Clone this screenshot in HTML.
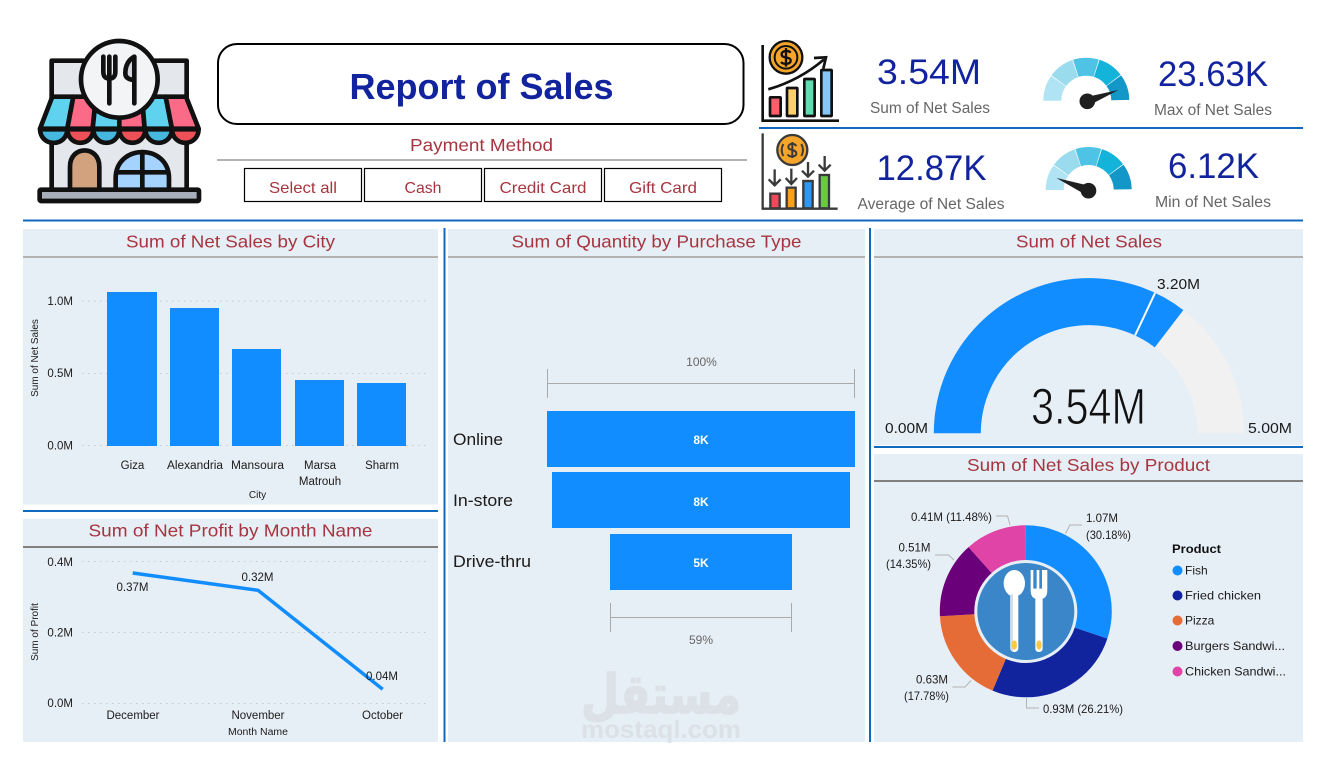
<!DOCTYPE html>
<html><head><meta charset="utf-8"><title>Report of Sales</title>
<style>
html,body{margin:0;padding:0;background:#fff;width:1323px;height:759px;overflow:hidden}
svg{display:block}
text{font-family:"Liberation Sans","DejaVu Sans",sans-serif;fill:#1c1b1a}
.t{font-size:17.5px;fill:#A6353F;text-anchor:middle}
.b{font-size:16px;fill:#A6353F;text-anchor:middle}
.k{font-size:35px;fill:#12239E;text-anchor:middle}
.l{font-size:15.5px;fill:#666;text-anchor:middle}
.a{font-size:11.5px;text-anchor:end}
.x{font-size:11.5px;text-anchor:middle}
.n{font-size:10px;text-anchor:middle}
.d{font-size:12px}
.m{font-size:14.5px}
.g{stroke:#c4c8cc;stroke-width:1;stroke-dasharray:1.5 4.5}
</style></head><body>
<svg width="1323" height="759" viewBox="0 0 1323 759" xmlns="http://www.w3.org/2000/svg">
<rect width="1323" height="759" fill="#fff"/>

<!-- store icon -->
<g transform="translate(20 30) scale(.3333)" stroke="#111" stroke-width="14" stroke-linejoin="round">
<rect x="95" y="92" width="405" height="390" fill="#E4E8EC"/>
<path d="M97 200H160L142 296H60Z" fill="#5FD2F0"/>
<path d="M160 200H228L218 296H142Z" fill="#FB6B87"/>
<path d="M228 200H298V296H218Z" fill="#5FD2F0"/>
<path d="M298 200H366L374 296H298Z" fill="#FB6B87"/>
<path d="M366 200H437L456 296H374Z" fill="#5FD2F0"/>
<path d="M437 200H498L536 296H456Z" fill="#FB6B87"/>
<path d="M60 298H142C140 352 62 352 60 298Z" fill="#46B8E0"/>
<path d="M142 298H220C218 352 144 352 142 298Z" fill="#EE5058"/>
<path d="M220 298H298C296 352 222 352 220 298Z" fill="#46B8E0"/>
<path d="M298 298H376C374 352 300 352 298 298Z" fill="#EE5058"/>
<path d="M376 298H456C454 352 378 352 376 298Z" fill="#46B8E0"/>
<path d="M456 298H536C534 352 458 352 456 298Z" fill="#EE5058"/>
<path d="M150 480V410C150 345 238 345 238 410V480Z" fill="#D2A27F"/>
<path d="M287 480V445C287 340 447 340 447 445V480Z" fill="#A5D3FF"/>
<path d="M367 362V480M287 427H447" fill="none"/>
<rect x="59" y="479" width="478" height="34" rx="4" fill="#A8AFBB"/>
<circle cx="298" cy="148" r="115" fill="#F2F4F6"/>
<path d="M250 80V125Q250 146 268 146Q286 146 286 125V80M268 80V220" fill="none" stroke-linecap="round"/>
<path d="M343 220V80Q316 95 316 130Q316 148 343 150" fill="#D4D8DC" stroke-linecap="round"/>
</g>

<!-- title -->
<rect x="218" y="44" width="525.500" height="80" rx="19" fill="#fff" stroke="#000" stroke-width="2"/>
<text x="481.500" y="99" font-size="36" font-weight="700" text-anchor="middle" textLength="264" lengthAdjust="spacingAndGlyphs" style="fill:#12239E">Report of Sales</text>
<text class="t" x="481.500" y="151" textLength="143" lengthAdjust="spacingAndGlyphs">Payment Method</text>
<rect x="217" y="159" width="530" height="2" fill="#b3b3b3"/>
<g fill="#fff" stroke="#000" stroke-width="1.200">
<rect x="244.500" y="168.500" width="117" height="33"/><rect x="364.500" y="168.500" width="117" height="33"/><rect x="484.500" y="168.500" width="117" height="33"/><rect x="604.500" y="168.500" width="117" height="33"/>
</g>
<text class="b" x="303" y="193" textLength="68" lengthAdjust="spacingAndGlyphs">Select all</text>
<text class="b" x="423" y="193" textLength="37" lengthAdjust="spacingAndGlyphs">Cash</text>
<text class="b" x="543" y="193" textLength="87" lengthAdjust="spacingAndGlyphs">Credit Card</text>
<text class="b" x="663" y="193" textLength="68" lengthAdjust="spacingAndGlyphs">Gift Card</text>

<!-- growth icon -->
<g transform="translate(750 30) scale(.3333)" stroke="#111" stroke-width="8" fill="none">
<path d="M38 45V272H267" stroke-width="8"/>
<rect x="60" y="202" width="32" height="56" fill="#FF5C6C" rx="2"/>
<rect x="111" y="174" width="31" height="84" fill="#FFCF68" rx="2"/>
<rect x="163" y="147" width="31" height="111" fill="#5FDDB0" rx="2"/>
<rect x="214" y="120" width="31" height="138" fill="#85C6F7" rx="2"/>
<circle cx="108" cy="82" r="49" fill="#F5A52A" stroke-width="7"/>
<circle cx="108" cy="82" r="34" fill="#F5A52A" stroke-width="6"/>
<path d="M122 68C116 60 95 61 95 73C95 87 122 78 122 92C122 104 100 104 93 96M108 54V110" stroke-width="7"/>
<path d="M55 178Q150 150 222 88M192 84L228 82L220 116" stroke-width="8"/>
</g>

<!-- average icon -->
<g transform="translate(750 120) scale(.3333)" fill="none" stroke="#3a3a3a" stroke-width="7">
<path d="M38 40V266H263"/>
<rect x="61" y="221" width="28" height="44" fill="#F0475A"/>
<rect x="110" y="203" width="27" height="62" fill="#F9A11B"/>
<rect x="160" y="183" width="28" height="82" fill="#2E96F5"/>
<rect x="209" y="165" width="28" height="100" fill="#6CC93A"/>
<path d="M74 148V196M56 178L74 196L92 178M124 146V192M107 174L124 192L141 174M174 126V170M156 152L174 170L192 152M224 108V152M206 134L224 152L242 134"/>
<circle cx="127" cy="90" r="45" fill="#F5A52A"/>
<path d="M100 72Q90 90 100 108M154 72Q164 90 154 108M139 78C133 68 115 70 115 81C115 93 139 87 139 100C139 112 118 112 113 103M127 66V114" stroke-width="6"/>
</g>

<!-- KPI -->
<text class="k" x="929" y="84" textLength="104" lengthAdjust="spacingAndGlyphs">3.54M</text>
<text class="l" x="930" y="113" textLength="120" lengthAdjust="spacingAndGlyphs">Sum of Net Sales</text>
<text class="k" x="1213" y="86" textLength="110" lengthAdjust="spacingAndGlyphs">23.63K</text>
<text class="l" x="1213" y="115" textLength="118" lengthAdjust="spacingAndGlyphs">Max of Net Sales</text>
<text class="k" x="931.500" y="180" textLength="110" lengthAdjust="spacingAndGlyphs">12.87K</text>
<text class="l" x="931" y="209" textLength="147" lengthAdjust="spacingAndGlyphs">Average of Net Sales</text>
<text class="k" x="1213.500" y="178" textLength="91" lengthAdjust="spacingAndGlyphs">6.12K</text>
<text class="l" x="1213" y="207" textLength="116" lengthAdjust="spacingAndGlyphs">Min of Net Sales</text>

<!-- small gauges -->
<g fill="none" stroke-width="18">
<g transform="rotate(180 1086.300 100.700)">
<circle cx="1086.300" cy="100.700" r="34" pathLength="100" stroke="#B0E3F3" stroke-dasharray="9.700 90.300" stroke-dashoffset="0"/>
<circle cx="1086.300" cy="100.700" r="34" pathLength="100" stroke="#9ADBEE" stroke-dasharray="9.700 90.300" stroke-dashoffset="-10"/>
<circle cx="1086.300" cy="100.700" r="34" pathLength="100" stroke="#4FC3E6" stroke-dasharray="9.700 90.300" stroke-dashoffset="-20"/>
<circle cx="1086.300" cy="100.700" r="34" pathLength="100" stroke="#14B3D9" stroke-dasharray="9.700 90.300" stroke-dashoffset="-30"/>
<circle cx="1086.300" cy="100.700" r="34" pathLength="100" stroke="#1397C9" stroke-dasharray="9.700 90.300" stroke-dashoffset="-40"/>
</g>
<g transform="rotate(180 1088.700 190)">
<circle cx="1088.700" cy="190" r="34" pathLength="100" stroke="#B0E3F3" stroke-dasharray="9.700 90.300" stroke-dashoffset="0"/>
<circle cx="1088.700" cy="190" r="34" pathLength="100" stroke="#9ADBEE" stroke-dasharray="9.700 90.300" stroke-dashoffset="-10"/>
<circle cx="1088.700" cy="190" r="34" pathLength="100" stroke="#4FC3E6" stroke-dasharray="9.700 90.300" stroke-dashoffset="-20"/>
<circle cx="1088.700" cy="190" r="34" pathLength="100" stroke="#14B3D9" stroke-dasharray="9.700 90.300" stroke-dashoffset="-30"/>
<circle cx="1088.700" cy="190" r="34" pathLength="100" stroke="#1397C9" stroke-dasharray="9.700 90.300" stroke-dashoffset="-40"/>
</g>
</g>
<g fill="#1f1f1f">
<circle cx="1087.300" cy="101.300" r="7.800"/><path d="M1085.800 97.100L1118.500 90L1088.800 105.500Z"/>
<circle cx="1088.500" cy="190.700" r="7.800"/><path d="M1056.500 178L1090.300 186L1086.700 195.400Z"/>
</g>

<!-- divider lines -->
<g fill="#1068BF">
<rect x="759" y="127" width="544" height="2"/>
<rect x="23" y="219.500" width="1280" height="2"/>
<rect x="23" y="510" width="415" height="2"/>
<rect x="443.500" y="228" width="2" height="514"/>
<rect x="869" y="228" width="2" height="514"/>
<rect x="874" y="446" width="429" height="2"/>
</g>

<!-- panels -->
<g fill="#E6EEF6">
<rect x="23" y="229" width="415" height="275.500"/>
<rect x="23" y="519" width="415" height="223"/>
<rect x="448" y="229" width="417" height="513"/>
<rect x="874" y="229" width="429" height="216"/>
<rect x="874" y="454" width="429" height="288"/>
</g>
<g fill="#b3b3b3">
<rect x="23" y="256" width="415" height="2"/>
<rect x="448" y="256" width="417" height="2"/>
<rect x="874" y="256" width="429" height="2"/>
</g>
<rect x="23" y="546" width="415" height="2" fill="#808080"/>
<rect x="874" y="480" width="429" height="2" fill="#808080"/>

<text class="t" x="230.500" y="247.500" textLength="209" lengthAdjust="spacingAndGlyphs">Sum of Net Sales by City</text>
<text class="t" x="656.500" y="247.500" textLength="290" lengthAdjust="spacingAndGlyphs">Sum of Quantity by Purchase Type</text>
<text class="t" x="1089" y="247.500" textLength="146" lengthAdjust="spacingAndGlyphs">Sum of Net Sales</text>
<text class="t" x="230.500" y="536.500" textLength="284" lengthAdjust="spacingAndGlyphs">Sum of Net Profit by Month Name</text>
<text class="t" x="1088.500" y="471" textLength="243" lengthAdjust="spacingAndGlyphs">Sum of Net Sales by Product</text>

<!-- bar chart -->
<path class="g" d="M82 301H428M82 373.500H428M82 445.500H428"/>
<g fill="#118DFF">
<rect x="107" y="292" width="50" height="154"/>
<rect x="170" y="308" width="49" height="138"/>
<rect x="232" y="349" width="49" height="97"/>
<rect x="295" y="380" width="49" height="66"/>
<rect x="357" y="383" width="49" height="63"/>
</g>
<text class="a" x="73" y="305">1.0M</text><text class="a" x="73" y="377">0.5M</text><text class="a" x="73" y="449.500">0.0M</text>
<text class="x" x="132.500" y="469">Giza</text>
<text class="x" x="195" y="469" textLength="56" lengthAdjust="spacingAndGlyphs">Alexandria</text>
<text class="x" x="257.500" y="469" textLength="53" lengthAdjust="spacingAndGlyphs">Mansoura</text>
<text class="x" x="320" y="469">Marsa</text>
<text class="x" x="320" y="485">Matrouh</text>
<text class="x" x="382" y="469">Sharm</text>
<text class="n" x="257.500" y="498">City</text>
<text class="n" transform="translate(38 358) rotate(-90)">Sum of Net Sales</text>

<!-- line chart -->
<path class="g" d="M82 561.500H428M82 632.500H428M82 703.500H428"/>
<path d="M132.700 573L258 590.300L382.700 689.300" fill="none" stroke="#118DFF" stroke-width="3.500" stroke-linejoin="round"/>
<text class="a" x="73" y="566">0.4M</text><text class="a" x="73" y="636.500">0.2M</text><text class="a" x="73" y="707">0.0M</text>
<text class="x" x="132.500" y="591">0.37M</text><text class="x" x="257.500" y="581">0.32M</text><text class="x" x="382" y="680">0.04M</text>
<text class="x" x="133" y="719">December</text><text class="x" x="258" y="719">November</text><text class="x" x="382.500" y="719">October</text>
<text class="n" x="258" y="735" textLength="60" lengthAdjust="spacingAndGlyphs">Month Name</text>
<text class="n" transform="translate(38 632) rotate(-90)">Sum of Profit</text>

<!-- funnel -->
<g fill="#118DFF">
<rect x="547" y="411" width="308" height="56"/>
<rect x="552" y="472" width="298" height="56"/>
<rect x="610" y="534" width="182" height="56"/>
</g>
<path d="M547.500 369V398M547.500 383.500H854.500M854.500 369V398M610.500 603V632M610.500 617.500H791.500M791.500 603V632" stroke="#aaa" stroke-width="1" fill="none"/>
<text x="701.500" y="366" font-size="12" text-anchor="middle" style="fill:#666">100%</text>
<text x="701" y="644" font-size="12" text-anchor="middle" style="fill:#666">59%</text>
<text x="453" y="445" font-size="16.500" textLength="50" lengthAdjust="spacingAndGlyphs">Online</text>
<text x="453" y="506" font-size="16.500" textLength="60" lengthAdjust="spacingAndGlyphs">In-store</text>
<text x="453" y="567" font-size="16.500" textLength="78" lengthAdjust="spacingAndGlyphs">Drive-thru</text>
<g font-size="12" font-weight="700" text-anchor="middle">
<text x="701" y="444" style="fill:#fff">8K</text><text x="701" y="506" style="fill:#fff">8K</text><text x="701" y="567" style="fill:#fff">5K</text>
</g>

<!-- watermark -->
<text x="661" y="713" font-size="54" font-weight="700" text-anchor="middle" textLength="160" lengthAdjust="spacingAndGlyphs" style="font-family:'DejaVu Sans',sans-serif;fill:#DBE1E7;stroke:#DBE1E7;stroke-width:1.500">مستقل</text>
<text x="661" y="738" font-size="25" font-weight="700" text-anchor="middle" textLength="160" lengthAdjust="spacingAndGlyphs" style="fill:#DBE1E7">mostaql.com</text>

<!-- main gauge -->
<g fill="none" stroke-width="47" transform="rotate(180 1089 433.300)">
<circle cx="1089" cy="433.300" r="131.700" pathLength="200" stroke="#F1F1F1" stroke-dasharray="100 100"/>
<circle cx="1089" cy="433.300" r="131.700" pathLength="200" stroke="#118DFF" stroke-dasharray="70.800 129.200"/>
</g>
<path d="M1155 293.100L1135.100 335.300" stroke="#fff" stroke-width="2" fill="none"/>
<text x="1088.500" y="424" font-size="51" text-anchor="middle" textLength="115" lengthAdjust="spacingAndGlyphs" style="fill:#111;stroke:#E6EEF6;stroke-width:.9">3.54M</text>
<text class="m" x="885" y="433" textLength="43" lengthAdjust="spacingAndGlyphs">0.00M</text>
<text class="m" x="1248" y="433" textLength="44" lengthAdjust="spacingAndGlyphs">5.00M</text>
<text class="m" x="1157" y="289" textLength="43" lengthAdjust="spacingAndGlyphs">3.20M</text>

<!-- donut -->
<g fill="none" stroke-width="36" transform="rotate(-90 1025.800 611.300)">
<circle cx="1025.800" cy="611.300" r="68" pathLength="100" stroke="#118DFF" stroke-dasharray="30.180 69.820"/>
<circle cx="1025.800" cy="611.300" r="68" pathLength="100" stroke="#12239E" stroke-dasharray="26.210 73.790" stroke-dashoffset="-30.180"/>
<circle cx="1025.800" cy="611.300" r="68" pathLength="100" stroke="#E66C37" stroke-dasharray="17.780 82.220" stroke-dashoffset="-56.390"/>
<circle cx="1025.800" cy="611.300" r="68" pathLength="100" stroke="#6B007B" stroke-dasharray="14.350 85.650" stroke-dashoffset="-74.170"/>
<circle cx="1025.800" cy="611.300" r="68" pathLength="100" stroke="#E044A7" stroke-dasharray="11.480 88.520" stroke-dashoffset="-88.520"/>
</g>
<circle cx="1025.800" cy="611.500" r="50" fill="#3A86C8" stroke="#E6EEF6" stroke-width="3"/>
<g transform="translate(880 490) scale(.3333)">
<ellipse cx="403" cy="280" rx="32" ry="40" fill="#fff"/>
<rect x="391" y="310" width="24" height="176" rx="11" fill="#fff"/>
<rect x="393" y="312" width="6" height="170" fill="#d9dde0"/>
<ellipse cx="403" cy="465" rx="8" ry="14" fill="#F7C948"/>
<path d="M452 240H460V296H470V240H478V296H486V240H494V240H502V300Q502 322 488 326V475Q488 486 477 486Q466 486 466 475V326Q452 322 452 300Z" fill="#fff"/>
<ellipse cx="477" cy="465" rx="8" ry="14" fill="#F7C948"/>
</g>
<path d="M1065.500 533.500L1070 525H1082M1026.500 698V708H1039M971 680.500L965 687H952.500M935 555H948.500L954 560M996 516H1007.500L1010 525" fill="none" stroke="#b3b3b3" stroke-width="1"/>
<g class="d">
<text class="d" x="1086" y="522" textLength="32" lengthAdjust="spacingAndGlyphs">1.07M</text>
<text class="d" x="1086" y="539" textLength="45" lengthAdjust="spacingAndGlyphs">(30.18%)</text>
<text class="d" x="1043" y="713" textLength="80" lengthAdjust="spacingAndGlyphs">0.93M (26.21%)</text>
<text class="d" x="916" y="683.500" textLength="32" lengthAdjust="spacingAndGlyphs">0.63M</text>
<text class="d" x="904" y="700" textLength="45" lengthAdjust="spacingAndGlyphs">(17.78%)</text>
<text class="d" x="898.500" y="551.500" textLength="32" lengthAdjust="spacingAndGlyphs">0.51M</text>
<text class="d" x="886" y="568" textLength="45" lengthAdjust="spacingAndGlyphs">(14.35%)</text>
<text class="d" x="911" y="521" textLength="81" lengthAdjust="spacingAndGlyphs">0.41M (11.48%)</text>
</g>

<!-- legend -->
<text x="1172" y="553" font-size="12" font-weight="700" textLength="49" lengthAdjust="spacingAndGlyphs" style="fill:#111">Product</text>
<circle cx="1177.500" cy="570.500" r="5" fill="#118DFF"/>
<circle cx="1177.500" cy="595.500" r="5" fill="#12239E"/>
<circle cx="1177.500" cy="620.500" r="5" fill="#E66C37"/>
<circle cx="1177.500" cy="646" r="5" fill="#6B007B"/>
<circle cx="1177.500" cy="671.500" r="5" fill="#E044A7"/>
<text class="d" x="1185" y="574.500">Fish</text>
<text class="d" x="1185" y="599.500" textLength="76" lengthAdjust="spacingAndGlyphs">Fried chicken</text>
<text class="d" x="1185" y="624.500">Pizza</text>
<text class="d" x="1185" y="650" textLength="100" lengthAdjust="spacingAndGlyphs">Burgers Sandwi...</text>
<text class="d" x="1185" y="675.500" textLength="101" lengthAdjust="spacingAndGlyphs">Chicken Sandwi...</text>
</svg>
</body></html>
